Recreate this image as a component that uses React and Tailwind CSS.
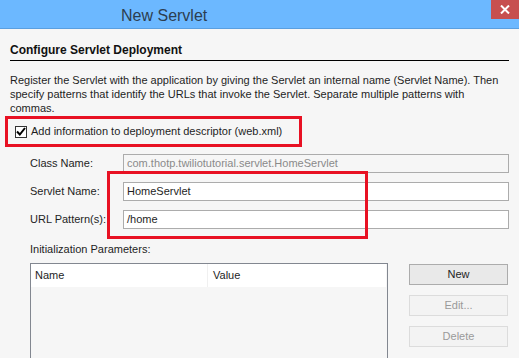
import React from "react";

const FONT = { fontFamily: '"Liberation Sans", Arial, sans-serif' };

function Field({ label, value, disabled }) {
  return (
    <div className="flex h-[19px] items-center">
      <div className="w-[93px] text-[11px] text-[#1e1e1e]">{label}</div>
      <div
        className={`flex h-[19px] flex-1 items-center border border-[#acacac] px-[3px] text-[11px] ${
          disabled ? "bg-[#f6f6f6] text-[#8a8a8a]" : "bg-white text-[#1e1e1e]"
        }`}
      >
        {value}
      </div>
    </div>
  );
}

function Button({ children, enabled }) {
  return (
    <div
      className={`flex h-[21px] w-[99px] items-center justify-center border text-[11px] ${
        enabled
          ? "border-[#acacac] bg-[#e9e9e9] text-[#1e1e1e]"
          : "border-[#dcdcdc] bg-[#f3f3f3] text-[#9a9a9a]"
      }`}
    >
      {children}
    </div>
  );
}

export default function App() {
  return (
    <div className="relative h-[358px] w-[519px] overflow-hidden bg-[#f6f6f6]" style={FONT}>
      <div className="flex h-[29px] items-start justify-between border-b border-[#5a9fe0] bg-[#6cb8ff]">
        <div className="pl-[121px] pt-[4px] text-[16px] text-[#2c3e50]">New Servlet</div>
        <div className="flex h-[19px] w-[28px] items-center justify-center bg-[#c75050]">
          <svg width="10" height="9" viewBox="0 0 10 9">
            <path d="M1 0.5 L9 8.5 M9 0.5 L1 8.5" stroke="white" strokeWidth="2" />
          </svg>
        </div>
      </div>

      <div className="px-[10px]">
        <div className="mt-[12px] w-[499px] border-b border-black pb-[1px] text-[12px] font-bold text-[#111]">
          Configure Servlet Deployment
        </div>
        <div className="mt-[12px] whitespace-nowrap text-[11px] leading-[14px] text-[#1e1e1e]">
          <div>Register the Servlet with the application by giving the Servlet an internal name (Servlet Name). Then</div>
          <div>specify patterns that identify the URLs that invoke the Servlet. Separate multiple patterns with</div>
          <div>commas.</div>
        </div>
      </div>

      <div className="ml-[5px] mt-[1px] flex h-[31px] w-[297px] items-center border-[3px] border-[#e81123] pl-[7px]">
        <div className="flex h-[12px] w-[12px] shrink-0 items-center justify-center border border-[#333] bg-white">
          <svg width="10" height="9" viewBox="0 0 10 9">
            <path d="M1 4.5 L3.8 7.5 L9 1" stroke="#000" strokeWidth="2" fill="none" />
          </svg>
        </div>
        <span className="ml-[4px] whitespace-nowrap text-[11px] text-[#1e1e1e]">
          Add information to deployment descriptor (web.xml)
        </span>
      </div>

      <div className="ml-[30px] mr-[10px] mt-[7px] flex flex-col gap-[9px]">
        <Field label="Class Name:" value="com.thotp.twiliotutorial.servlet.HomeServlet" disabled />
        <Field label="Servlet Name:" value="HomeServlet" />
        <Field label="URL Pattern(s):" value="/home" />
      </div>

      <div className="ml-[30px] mt-[12px] text-[11px] text-[#1e1e1e]">Initialization Parameters:</div>

      <div className="ml-[30px] mt-[5px] flex gap-[21px]">
        <div className="h-[120px] w-[358px] border border-[#828790] bg-[#f6f6f6]">
          <div className="flex h-[23px] w-[355px] bg-white text-[11px] text-[#1e1e1e]">
            <div className="flex w-[177px] items-center border-r border-[#f0f0f0] pl-[4px]">Name</div>
            <div className="flex flex-1 items-center pl-[5px]">Value</div>
          </div>
        </div>
        <div className="flex flex-col gap-[10px] pt-[1px]">
          <Button enabled>New</Button>
          <Button>Edit...</Button>
          <Button>Delete</Button>
        </div>
      </div>

      <div className="pointer-events-none absolute left-[107px] top-[171px] h-[68px] w-[261px] border-[3px] border-[#e81123]" />
    </div>
  );
}
